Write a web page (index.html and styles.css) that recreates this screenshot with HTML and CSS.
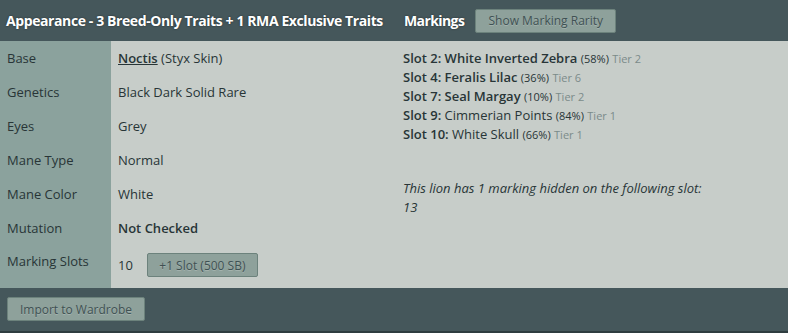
FILE: index.html
```html
<!DOCTYPE html>
<html lang="en">
<head>
    <meta charset="UTF-8">
    <title>Lion Appearance</title>
    <link rel="stylesheet" href="styles.css">
</head>
<body>

<div class="appearance_panel">
    <!-- ===== HEADER ===== -->
    <div class="panel_header">
        <div class="header_left">
            <h3>Appearance - 3 Breed-Only Traits + 1 RMA Exclusive Traits</h3>
        </div>
        <div class="header_right">
            <h3>Markings</h3>
            <button class="grey_button rarity_button">Show Marking Rarity</button>
        </div>
    </div>

    <!-- ===== BODY ===== -->
    <div class="panel_body">
        <div class="trait_table">
            <div class="trait_row"><span class="trait_label">Base</span><span class="trait_value"><a href="#" class="base_link">Noctis</a> (Styx Skin)</span></div>
            <div class="trait_row"><span class="trait_label">Genetics</span><span class="trait_value">Black Dark Solid Rare</span></div>
            <div class="trait_row"><span class="trait_label">Eyes</span><span class="trait_value">Grey</span></div>
            <div class="trait_row"><span class="trait_label">Mane Type</span><span class="trait_value">Normal</span></div>
            <div class="trait_row"><span class="trait_label">Mane Color</span><span class="trait_value">White</span></div>
            <div class="trait_row"><span class="trait_label">Mutation</span><span class="trait_value bold_display">Not Checked</span></div>
            <div class="trait_row slots_row">
                <span class="trait_label">Marking Slots</span>
                <span class="trait_value">10 <button class="grey_button slot_button">+1 Slot (500 SB)</button></span>
            </div>
        </div>

        <div class="markings_list">
            <p><b>Slot 2: White Inverted Zebra</b> <span class="pct">(58%)</span> <span class="tier">Tier 2</span></p>
            <p><b>Slot 4: Feralis Lilac</b> <span class="pct">(36%)</span> <span class="tier">Tier 6</span></p>
            <p><b>Slot 7: Seal Margay</b> <span class="pct">(10%)</span> <span class="tier">Tier 2</span></p>
            <p><b>Slot 9:</b> Cimmerian Points <span class="pct">(84%)</span> <span class="tier">Tier 1</span></p>
            <p><b>Slot 10:</b> White Skull <span class="pct">(66%)</span> <span class="tier">Tier 1</span></p>

            <p class="hidden_note">This lion has 1 marking hidden on the following slot:<br>13</p>
        </div>
    </div>

    <!-- ===== FOOTER ===== -->
    <div class="panel_footer">
        <button class="grey_button">Import to Wardrobe</button>
    </div>
</div>

</body>
</html>
```

FILE: styles.css
```css
body {
    margin: 0;
    font-family: 'Open Sans', sans-serif;
    font-size: 13px;
    color: #283537;
    background-color: #45575b;
}

b,
.bold_display {
    font-weight: 600;
}

button {
    cursor: pointer;
}

.grey_button {
    font-family: 'Open Sans', sans-serif;
    font-size: 12px;
    height: 24px;
    padding: 0 11px;
    background-color: #8ea19b;
    border: 1px solid #6c827c;
    border-radius: 2px;
    color: #3f5153;
    text-shadow: 0 1px 0 rgba(255, 255, 255, 0.2);
}

.grey_button:hover {
    background-color: #9fb2ab;
}

/* ===== Header ===== */
.panel_header {
    display: flex;
    height: 41px;
    align-items: center;
    background-color: #45575b;
}

.panel_header h3 {
    margin: 0;
    font-size: 14px;
    letter-spacing: -0.4px;
    color: #ffffff;
    text-shadow: 0 0 2px rgba(0, 0, 0, 0.5);
}

.header_left {
    width: 390px;
    padding-left: 6px;
    box-sizing: border-box;
}

.header_right {
    display: flex;
    align-items: center;
    gap: 11px;
    padding-left: 14px;
}

.header_right h3 {
    letter-spacing: -0.6px;
}

.rarity_button {
    width: 141px;
    padding: 0;
}

/* ===== Body ===== */
.panel_body {
    display: flex;
    background-color: #c7cdc9;
    height: 247px;
}

.trait_table {
    width: 390px;
    display: flex;
    flex-direction: column;
    background: linear-gradient(to right, #8ba29d 111px, transparent 111px);
}

.trait_row {
    display: flex;
    align-items: center;
    height: 34px;
}

.trait_label {
    width: 111px;
    padding-left: 7px;
    box-sizing: border-box;
}

.trait_value {
    padding-left: 7px;
}

.base_link {
    color: #283537;
    font-weight: 600;
    text-decoration: underline;
}

.slots_row {
    flex: 1;
    align-items: flex-start;
    padding-top: 7px;
}

.slots_row .trait_value {
    display: flex;
    align-items: center;
    gap: 14px;
    margin-top: 1px;
}

.slot_button {
    width: 111px;
    padding: 0;
}

.markings_list {
    padding: 8px 0 0 13px;
}

.markings_list p {
    margin: 0;
    line-height: 19px;
}

.pct {
    font-size: 11px;
}

.tier {
    font-size: 11px;
    color: #7b8b8a;
}

.markings_list .hidden_note {
    margin-top: 35px;
    font-style: italic;
}

/* ===== Footer ===== */
.panel_footer {
    height: 45px;
    box-sizing: border-box;
    padding: 9px 7px 0;
    border-bottom: 2px solid #2f3d40;
}

.panel_footer .grey_button {
    width: 138px;
    padding: 0;
}
```
